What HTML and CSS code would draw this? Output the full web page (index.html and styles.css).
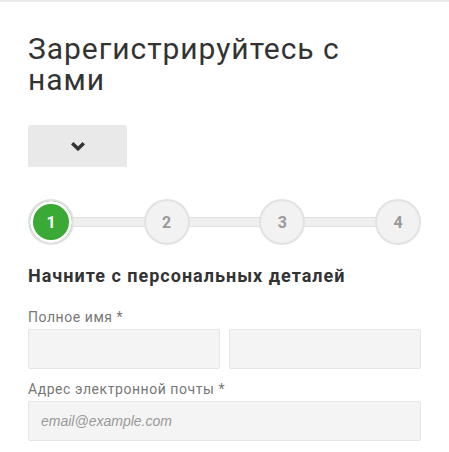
FILE: index.html
```html
<!DOCTYPE html>
<html lang="ru">
<head>
<meta charset="utf-8">
<title>Регистрация</title>
<link rel="stylesheet" href="styles.css">
</head>
<body>
<div class="page">
  <h1 class="title">Зарегистрируйтесь с нами</h1>
  <button class="dropdown" type="button" aria-label="Открыть">
    <svg width="16" height="10" viewBox="0 0 16 10"><path d="M2.2 2.2 L8 7.8 L13.8 2.2" fill="none" stroke="#333" stroke-width="3.4" stroke-linejoin="miter"/></svg>
  </button>
  <div class="stepper">
    <div class="step active">1</div>
    <div class="bar"></div>
    <div class="step">2</div>
    <div class="bar"></div>
    <div class="step">3</div>
    <div class="bar"></div>
    <div class="step">4</div>
  </div>
  <h2 class="subtitle">Начните с персональных деталей</h2>
  <label class="label">Полное имя *</label>
  <div class="row">
    <input class="field" type="text">
    <input class="field" type="text">
  </div>
  <label class="label second">Адрес электронной почты *</label>
  <input class="field wide" type="email" placeholder="email@example.com">
</div>
</body>
</html>
```
FILE: styles.css
```css
html, body {
  margin: 0;
  padding: 0;
  background: #fff;
}
body {
  border-top: 2px solid #e9e9e9;
  font-family: Roboto, "Noto Sans", sans-serif;
  color: #333;
}
.page {
  padding: 31px 28px 0 28px;
  display: flex;
  flex-direction: column;
  align-items: flex-start;
}
.title {
  margin: 0;
  font-size: 30px;
  line-height: 31px;
  font-weight: 400;
  letter-spacing: 0.95px;
  color: #333;
  width: 340px;
}
.dropdown {
  margin-top: 30px;
  width: 99px;
  height: 42px;
  border: 0;
  padding: 0;
  background: #e9e9e9;
  border-radius: 3px 3px 0 0;
  display: flex;
  align-items: center;
  justify-content: center;
}
.dropdown svg { display: block; margin-top: -1px; }
.stepper {
  margin-top: 32px;
  align-self: stretch;
  display: flex;
  align-items: center;
  height: 46px;
}
.step {
  flex: 0 0 auto;
  width: 46px;
  height: 46px;
  box-sizing: border-box;
  border-radius: 50%;
  border: 2px solid #e2e2e2;
  background: #f2f2f2;
  color: #9a9a9a;
  font-weight: 700;
  font-size: 16px;
  display: flex;
  align-items: center;
  justify-content: center;
  position: relative;
  z-index: 1;
}
.step.active {
  background: #3aa935;
  color: #fff;
  box-shadow: inset 0 0 0 3px #fff;
}
.bar {
  flex: 1 1 auto;
  height: 10px;
  box-sizing: border-box;
  background: #efefef;
  border-top: 1px solid #e0e0e0;
  border-bottom: 1px solid #e0e0e0;
  margin: 0 -2px;
}
.subtitle {
  margin: 20px 0 0 0;
  font-size: 18px;
  line-height: 22px;
  font-weight: 700;
  letter-spacing: 1px;
  color: #333;
}
.label {
  margin-top: 20px;
  margin-bottom: 2px;
  font-size: 14px;
  line-height: 20px;
  letter-spacing: 0.55px;
  color: #777;
}
.label.second { margin-top: 10px; }
.row {
  align-self: stretch;
  display: flex;
  gap: 9px;
}
.field {
  flex: 1 1 0;
  min-width: 0;
  height: 40px;
  box-sizing: border-box;
  margin: 0;
  background: #f4f4f4;
  border: 1px solid #e6e6e6;
  border-radius: 2px;
  padding: 0 12px;
  font-family: "Liberation Sans", Arial, sans-serif;
  font-size: 14px;
  color: #333;
}
.field.wide {
  align-self: stretch;
  flex: none;
}
.field::placeholder {
  color: #999;
  font-style: italic;
}
```
